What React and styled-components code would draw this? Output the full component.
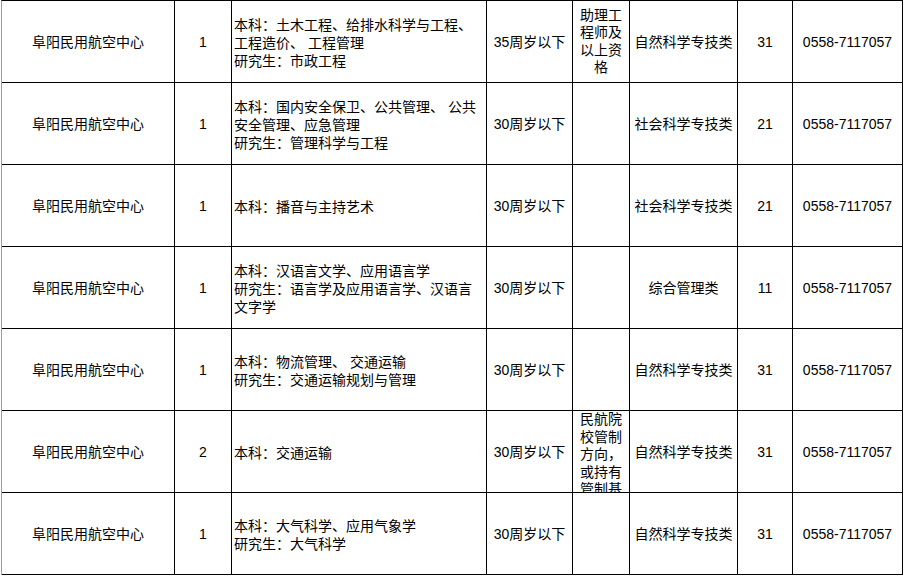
import React from 'react';
import styled, { createGlobalStyle } from 'styled-components';

const GlobalStyle = createGlobalStyle`
    html, body {
        margin: 0;
        padding: 0;
        background: #ffffff;
    }
    body {
        font-family: "Liberation Sans", "Noto Sans CJK SC", sans-serif;
        font-size: 14px;
        color: #000000;
    }
`

const rows = [
    {
        count: "1",
        major: "本科：土木工程、给排水科学与工程、\n工程造价、 工程管理\n研究生：市政工程",
        age: "35周岁以下",
        other: "助理工\n程师及\n以上资\n格",
        kind: "自然科学专技类",
        code: "31",
    },
    {
        count: "1",
        major: "本科：国内安全保卫、公共管理、 公共\n安全管理、应急管理\n研究生：管理科学与工程",
        age: "30周岁以下",
        other: "",
        kind: "社会科学专技类",
        code: "21",
    },
    {
        count: "1",
        major: "本科：播音与主持艺术",
        age: "30周岁以下",
        other: "",
        kind: "社会科学专技类",
        code: "21",
    },
    {
        count: "1",
        major: "本科：汉语言文学、应用语言学\n研究生：语言学及应用语言学、汉语言\n文字学",
        age: "30周岁以下",
        other: "",
        kind: "综合管理类",
        code: "11",
    },
    {
        count: "1",
        major: "本科：物流管理、 交通运输\n研究生：交通运输规划与管理",
        age: "30周岁以下",
        other: "",
        kind: "自然科学专技类",
        code: "31",
    },
    {
        count: "2",
        major: "本科：交通运输",
        age: "30周岁以下",
        other: "民航院\n校管制\n方向，\n或持有\n管制基\n础执照",
        otherTop: true,
        kind: "自然科学专技类",
        code: "31",
    },
    {
        count: "1",
        major: "本科：大气科学、应用气象学\n研究生：大气科学",
        age: "30周岁以下",
        other: "",
        kind: "自然科学专技类",
        code: "31",
    },
]

export default function App() {
    return (
        <Page>
            <GlobalStyle />
            <Sheet>
                {rows.map((r, i) => (
                    <Row key={i}>
                        <Cell>阜阳民用航空中心</Cell>
                        <Cell>{r.count}</Cell>
                        <Cell $align="left"><Lines>{r.major}</Lines></Cell>
                        <Cell>{r.age}</Cell>
                        <Cell $top={r.otherTop}><Lines $small>{r.other}</Lines></Cell>
                        <Cell>{r.kind}</Cell>
                        <Cell>{r.code}</Cell>
                        <Cell>0558-7117057</Cell>
                    </Row>
                ))}
            </Sheet>
        </Page>
    );
}

const Page = styled.div`
    height: 577px;
    overflow: hidden;
    display: flex;
`

const Sheet = styled.div`
    margin-left: 1px;
    border-left: 1px solid #a39c8c;
    border-top: 1px solid #000000;
    display: flex;
    flex-direction: column;
    align-self: flex-start;
`

const Row = styled.div`
    display: grid;
    grid-template-columns: 173px 57px 255px 86px 57px 108px 55px 110px;
    height: 82px;
    box-sizing: border-box;
    border-bottom: 1px solid #000000;
`

const Cell = styled.div`
    box-sizing: border-box;
    border-right: 1px solid #000000;
    display: flex;
    align-items: ${p => p.$top ? "flex-start" : "center"};
    justify-content: ${p => p.$align === "left" ? "flex-start" : "center"};
    text-align: ${p => p.$align === "left" ? "left" : "center"};
    padding: ${p => p.$align === "left" ? "2px 0 0 2px" : "0"};
    overflow: hidden;
    line-height: 18px;
    white-space: nowrap;
`

const Lines = styled.div`
    white-space: pre-line;
    line-height: ${p => p.$small ? "17.5px" : "18px"};
`
